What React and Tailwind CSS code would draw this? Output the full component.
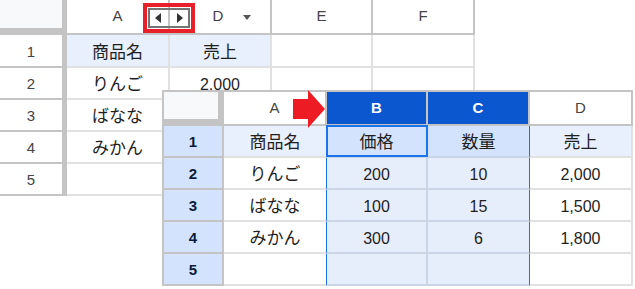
import React from 'react';

const backRows = [
  ['商品名', '売上'],
  ['りんご', '2,000'],
  ['ばなな', ''],
  ['みかん', ''],
  ['', ''],
];

const frontRows = [
  ['商品名', '価格', '数量', '売上'],
  ['りんご', '200', '10', '2,000'],
  ['ばなな', '100', '15', '1,500'],
  ['みかん', '300', '6', '1,800'],
  ['', '', '', ''],
];

const BackSheet = () => (
  <div className="relative grid w-[475px] grid-cols-[67px_103px_102px_101px_102px] grid-rows-[35px_33px_32px_32px_32px_32px]">
    <div className="border-r-[5px] border-b-[7px] border-[#c4c4c4] bg-[#f8f9fa]" />
    <div className="flex items-center justify-center border-r-2 border-b-2 border-[#c4c4c4] text-[15px] text-[#444]">A</div>
    <div className="relative flex items-center justify-center border-r-2 border-b-2 border-[#c4c4c4] pr-1 text-[15px] text-[#444]">
      D
      <span className="absolute right-[19px] top-[15px] h-0 w-0 border-x-[4px] border-t-[5px] border-x-transparent border-t-[#555]" />
    </div>
    <div className="flex items-center justify-center border-r-2 border-b-2 border-[#c4c4c4] text-[15px] text-[#444]">E</div>
    <div className="flex items-center justify-center border-r-2 border-b-2 border-[#c4c4c4] text-[15px] text-[#444]">F</div>

    {backRows.map((row, i) => (
      <React.Fragment key={i}>
        <div className="flex items-center justify-center border-r-[5px] border-b-2 border-[#c4c4c4] pt-[3px] text-[15px] text-[#444]">{i + 1}</div>
        <div className={`flex items-center justify-center border-r-2 border-b-2 border-[#e1e1e1] pt-1 text-[17px] text-[#1f1f1f] ${i === 0 ? 'bg-[#e8f0fe] border-[#d5dce8]' : ''}`}>{row[0]}</div>
        <div className={`flex items-center justify-center border-r-2 border-b-2 border-[#e1e1e1] pt-1 text-[16px] text-[#1f1f1f] ${i === 0 ? 'bg-[#e8f0fe] border-[#d5dce8] text-[17px]' : ''}`}>{row[1]}</div>
        <div className="border-r-2 border-b-2 border-[#e1e1e1]" />
        <div className="border-r-2 border-b-2 border-[#e1e1e1]" />
      </React.Fragment>
    ))}

    {/* highlight around the hidden-column arrows */}
    <div className="absolute left-[143px] top-[3px] flex h-[30px] w-[52px] items-center justify-center border-4 border-[#e8202a]">
      <div className="flex h-[20px] w-[42px] items-center justify-between border-2 border-[#757575] px-[5px]">
        <span className="h-0 w-0 border-y-[5px] border-r-[6px] border-y-transparent border-r-[#333]" />
        <span className="h-0 w-0 border-y-[5px] border-l-[6px] border-y-transparent border-l-[#333]" />
      </div>
    </div>
  </div>
);

const FrontSheet = () => (
  <div className="absolute left-[162px] top-[90px] grid grid-cols-[60px_103px_101px_102px_103px] grid-rows-[34px_32px_32px_32px_32px_32px] border-l-2 border-t-2 border-[#c4c4c4] bg-white">
    <div className="border-r-[6px] border-b-[7px] border-[#c4c4c4] bg-[#f8f9fa]" />
    <div className="flex items-center justify-center border-r-2 border-b-2 border-[#c4c4c4] text-[15px] text-[#444]">A</div>
    <div className="flex items-center justify-center border-r-2 border-b-2 border-[#c4c4c4] bg-[#0b57d0] text-[15px] font-bold text-white">B</div>
    <div className="flex items-center justify-center border-r-2 border-b-2 border-[#c4c4c4] bg-[#0b57d0] text-[15px] font-bold text-white">C</div>
    <div className="flex items-center justify-center border-r-2 border-b-2 border-[#c4c4c4] text-[15px] text-[#444]">D</div>

    {frontRows.map((row, i) => {
      const head = i === 0;
      const big = head ? 'text-[17px]' : 'text-[16px]';
      return (
        <React.Fragment key={i}>
          <div className="flex items-center justify-center border-r-2 border-b-2 border-[#c4c4c4] bg-[#d3e3fd] pt-[3px] text-[15px] font-bold text-[#0b1d3a]">{i + 1}</div>
          <div className={`flex items-center justify-center border-b-2 border-r border-b-[#e1e1e1] border-r-[#1a73e8] pt-1 ${head ? 'bg-[#e8f0fe] border-b-[#d5dce8] text-[17px]' : 'text-[17px]'} text-[#1f1f1f]`}>{row[0]}</div>
          <div className={`relative flex items-center justify-center border-r-2 border-b-2 border-[#cad5e6] pt-1 ${head ? 'bg-[#d3e3fd]' : 'bg-[#e6edfb]'} ${big} text-[#1f1f1f]`}>
            {row[1]}
            {head && <div className="absolute -left-[1px] -top-[1px] -right-[2px] -bottom-[1px] z-10 border-2 border-[#1a73e8]" />}
          </div>
          <div className={`flex items-center justify-center border-b-2 border-r border-b-[#cad5e6] border-r-[#1a73e8] pt-1 ${head ? 'bg-[#d3e3fd]' : 'bg-[#e6edfb]'} ${big} text-[#1f1f1f]`}>{row[2]}</div>
          <div className={`flex items-center justify-center border-r-2 border-b-2 border-[#e1e1e1] pt-1 ${head ? 'bg-[#e8f0fe] border-[#d5dce8]' : ''} ${big} text-[#1f1f1f]`}>{row[3]}</div>
        </React.Fragment>
      );
    })}

    {/* red arrow pointing at the hidden column */}
    <svg className="absolute left-[129px] top-[-2px] z-20" width="33" height="39" viewBox="0 0 33 39">
      <polygon points="0,9 15,9 15,0 32,19 15,38 15,29 0,29" fill="#ed1c24" />
    </svg>
  </div>
);

export default function App() {
  return (
    <div className="relative h-[289px] w-[635px] overflow-hidden bg-white font-['Liberation_Sans','Noto_Sans_CJK_JP',sans-serif]">
      <BackSheet />
      <FrontSheet />
    </div>
  );
}
